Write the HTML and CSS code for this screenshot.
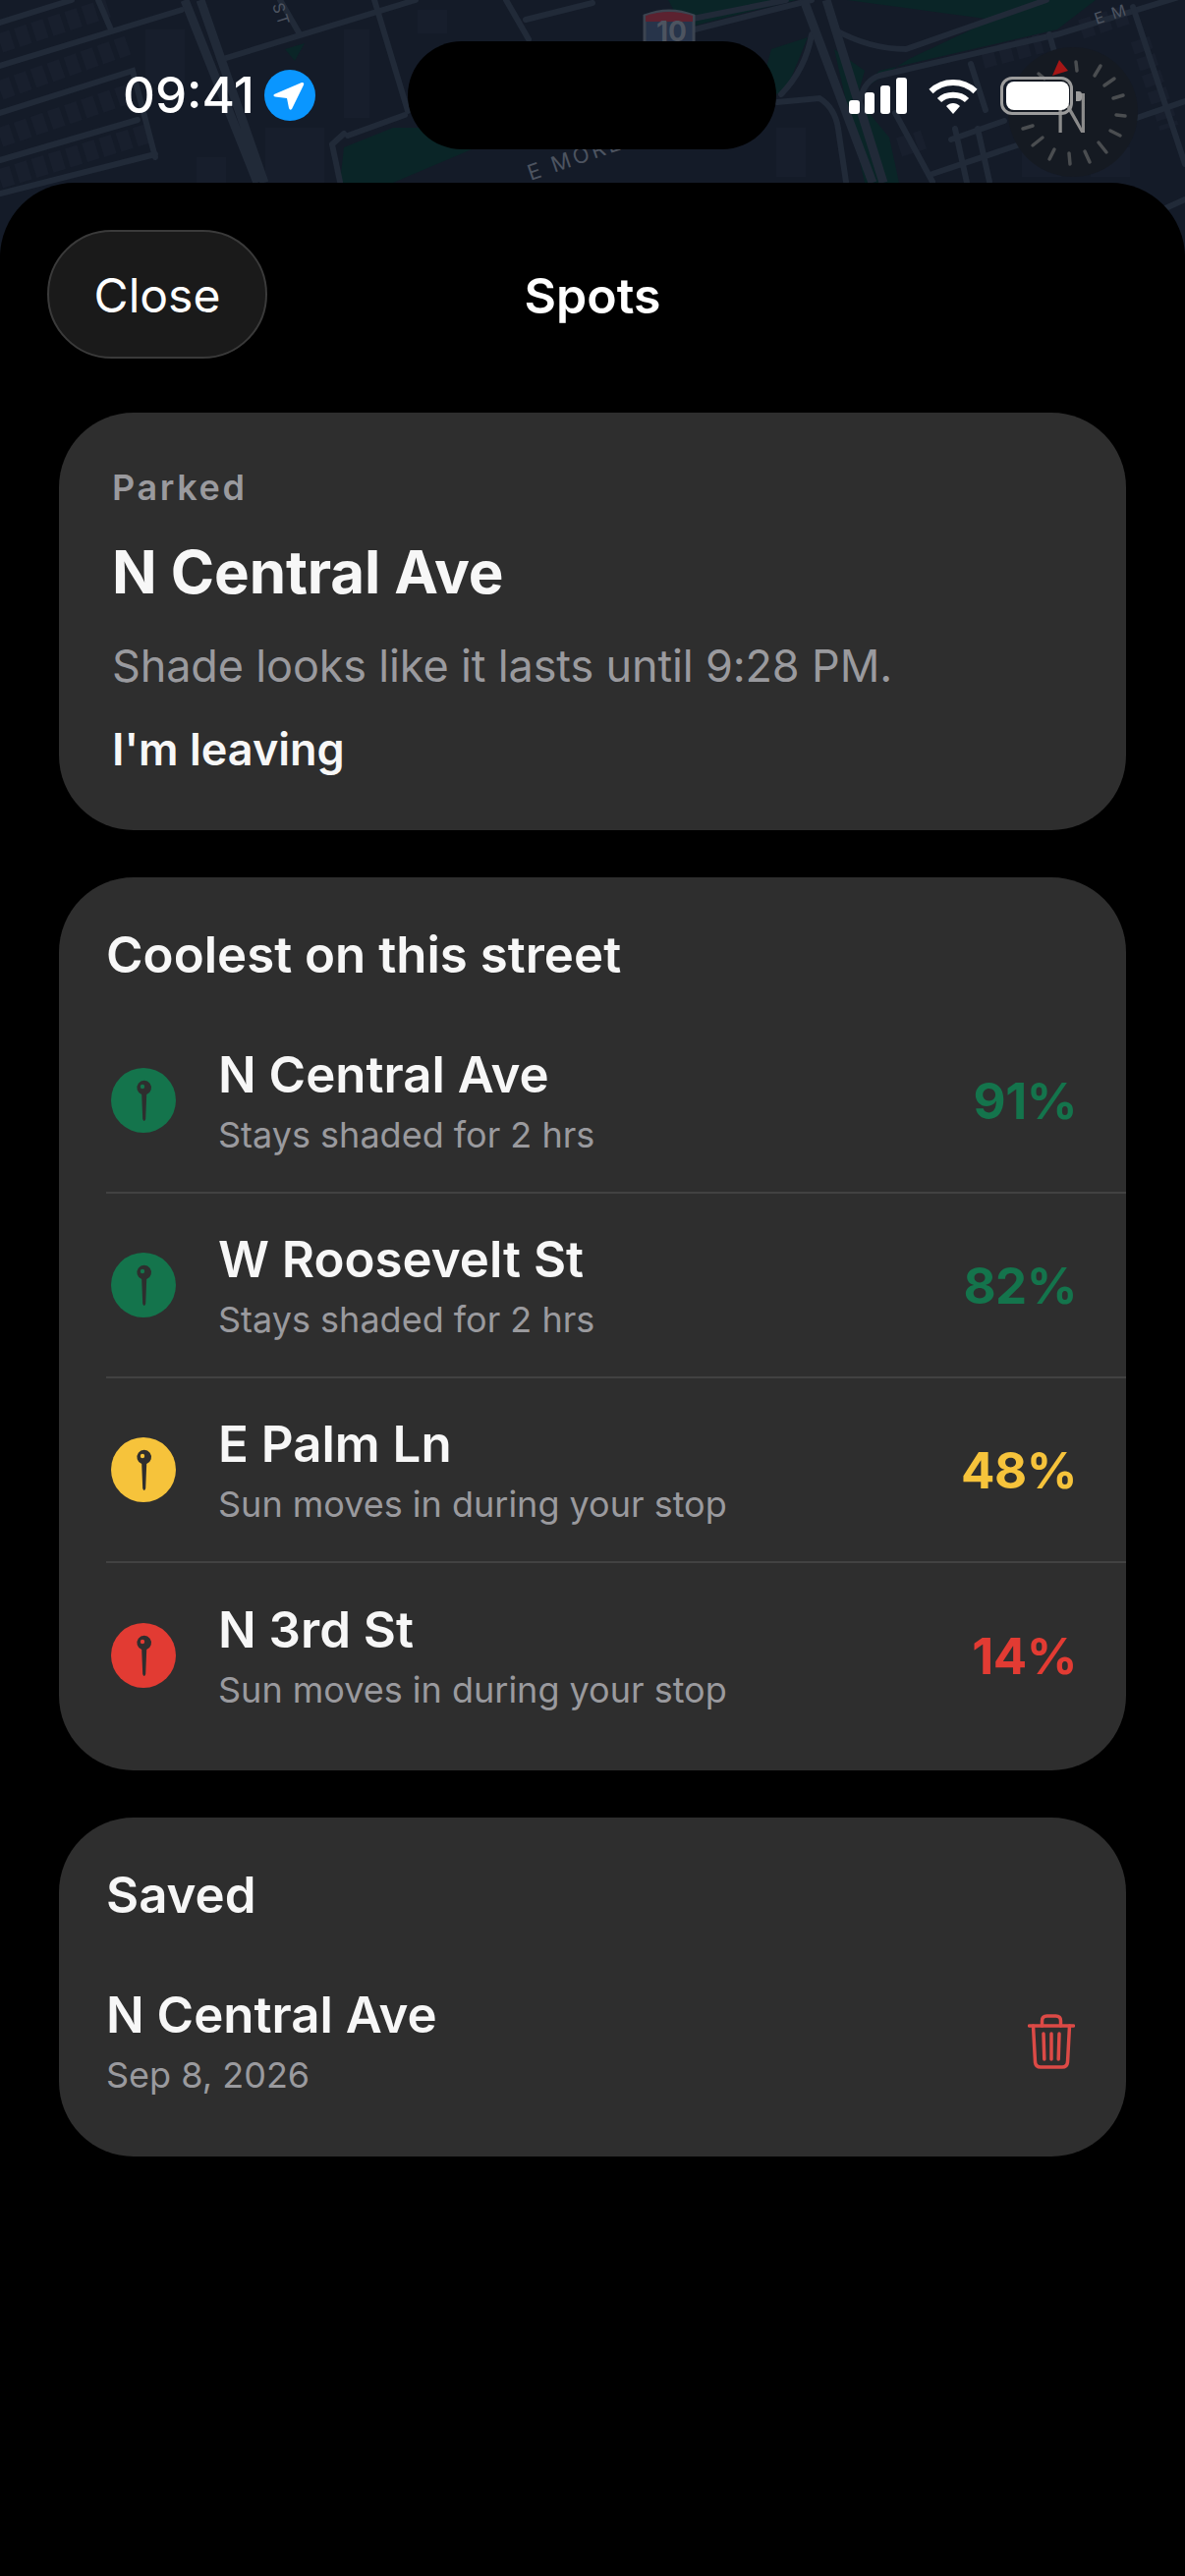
FILE: index.html
```html
<!DOCTYPE html>
<html lang="en">
<head>
    <meta charset="UTF-8">
    <meta name="viewport" content="width=device-width, initial-scale=1.0">
    <title>Spots</title>
    <link rel="stylesheet" href="styles.css">
</head>
<body>
    <div class="screen">
        <svg class="map" viewBox="0 0 1206 260" width="1206" height="260">
            <rect width="1206" height="260" fill="#141b28"/>
            <g class="park">
                <path d="M680 0 L810 0 L707 26 L690 18Z"/>
                <path d="M862 0 L1115 0 L1076 30 L895 72 L872 95 L925 60 L1010 20Z"/>
                <path d="M785 50 L822 38 L800 92 L770 104Z"/>
                <path d="M849 50 L880 72 L872 100 L905 140 L915 186 L880 186Z"/>
                <path d="M346 186 L350 150 L400 130 L477 130 L480 152 L400 186Z"/>
                <path d="M290 50 L310 44 L300 62Z"/>
            </g>
            <g class="blocks">
                <path d="M148 30h40v55h-40zM350 30h26v90h-26zM270 130h60v56h-60zM200 160h30v26h-30z"/>
                <path d="M425 10h30v24h-30zM1040 130h40v50h-40zM790 130h30v50h-30zM1110 150h40v30h-40z"/>
            </g>
            <g class="rowhouses">
                <path d="M0 44 L110 8"/>
                <path d="M0 92 L130 46"/>
                <path d="M0 140 L135 94"/>
                <path d="M0 182 L150 136"/>
                <path d="M1100 30 L1150 14"/>
                <path d="M1160 40 L1190 130"/>
                <path d="M915 150 L940 142M1000 60 L1060 44"/>
            </g>
            <g class="roads">
                <path d="M0 23 L73 0M0 67 L185 10M0 115 L135 72 L158 160M0 163 L140 122M0 197 L158 157M100 0 L112 28M227 60 L423 0M285 0 L304 33M381 0 L415 113M515 0 L538 40M535 20 L603 3"/>
                <path d="M354 138 L412 117M338 147 L346 185M338 147 L350 136"/>
                <path d="M707 30 L826 0M700 20 L800 0M849 30 Q885 50 922 50 L1065 0M876 100 Q880 82 895 77 L1076 35 L1206 -5M795 96 Q820 70 826 35M791 104 L834 100 Q850 110 853 131 L861 185"/>
                <path d="M911 115 L949 185M988 65 L1003 112M1068 35 L1084 92M972 131 L984 186M995 131 L1007 185M968 142 L1022 123M949 177 L1038 147M1153 7 L1206 167M1157 120 L1206 103M1184 213 L1206 203"/>
            </g>
            <g class="roads-major">
                <path d="M188 0 L262 186M204 0 L269 186"/>
                <path d="M818 0 L888 186M841 0 L899 186"/>
            </g>
            <text class="map-label" transform="translate(540 184) rotate(-19)">E MORELAND</text>
            <text class="map-label map-label-small" transform="translate(1116 25) rotate(-18)">E M</text>
            <text class="map-label map-label-small" transform="translate(277 5) rotate(72)">ST</text>
            <path d="M656 16 Q681 6 706 16 L706 44 L656 44Z" fill="#27344a" stroke="#3c4450" stroke-width="3"/>
            <path d="M657 16 Q681 8 705 16 L705 22 L657 22Z" fill="#5c2230"/>
            <text class="shield-num" x="668" y="42">10</text>
        </svg>

        <div class="compass">
            <svg viewBox="0 0 132 132" width="132" height="132">
                <circle cx="66" cy="66" r="66" fill="#151a22"/>
                <path d="M52 13 L45 29 L61 24Z" fill="#a51616"/>
                <path class="compass-ticks" d="M69 15 L70 24M88 29 L94 19M98 39 L108 32M107 52 L117 49M110 69 L119 70M104 85 L114 90M92 97 L100 107M78 106 L83 117M62 108 L63 119M47 104 L42 114M35 92 L25 100M25 80 L15 83M31 27 L37 32"/>
            </svg>
            <span class="compass-n">N</span>
        </div>

        <div class="status">
            <div class="status-left">
                <span class="time">09:41</span>
                <svg class="loc" viewBox="0 0 52 52" width="52" height="52">
                    <circle cx="26" cy="26" r="26" fill="#0a96ff"/>
                    <path d="M10 25 L38 13 Q41 12.500 40 15.500 L28 40 Q26 42 25 39 L23 29 L11 27.500 Q8.500 26.500 10 25Z" fill="#fff"/>
                </svg>
            </div>
            <div class="island"></div>
            <div class="status-right">
                <svg viewBox="0 0 59 37" width="59" height="37" fill="#fff">
                    <rect x="0" y="23" width="11" height="14" rx="3"/>
                    <rect x="16" y="15" width="10" height="22" rx="3"/>
                    <rect x="32" y="8" width="10" height="29" rx="3"/>
                    <rect x="48" y="0" width="11" height="37" rx="3"/>
                </svg>
                <svg class="wifi" viewBox="0 0 50 37" width="50" height="37" fill="none" stroke="#fff" stroke-width="6">
                    <path d="M2.500 14 C15 2 35 2 47.500 14"/>
                    <path d="M11 23 C18 16 32 16 39 23"/>
                    <path d="M18 29 L25 37 L32 29 C28 25 22 25 18 29Z" fill="#fff" stroke="none"/>
                </svg>
                <div class="battery">
                    <div class="battery-fill"></div>
                    <div class="battery-cap"></div>
                </div>
            </div>
        </div>

        <div class="sheet">
            <div class="nav">
                <button class="close-btn" type="button">Close</button>
                <h1 class="nav-title">Spots</h1>
            </div>

            <section class="card card-parked">
                <div class="eyebrow">Parked</div>
                <div class="parked-name">N Central Ave</div>
                <p class="parked-note">Shade looks like it lasts until 9:28 PM.</p>
                <div class="parked-action">I'm leaving</div>
            </section>

            <section class="card card-list">
                <h2 class="card-title">Coolest on this street</h2>
                <div class="row">
                    <span class="pin pin-green">
                        <svg viewBox="0 0 66 66" width="66" height="66"><path d="M31.200 26.900 L32.200 52 Q33.700 56 35.200 52 L36.200 26.900 A7.300 7.300 0 1 0 31.200 26.900Z" fill="#2e2e2e"/><circle cx="32" cy="19" r="2.200" fill="#14744c"/></svg>
                    </span>
                    <div class="row-text">
                        <div class="row-name">N Central Ave</div>
                        <div class="row-sub">Stays shaded for 2 hrs</div>
                    </div>
                    <span class="pct pct-green">91%</span>
                </div>
                <div class="row">
                    <span class="pin pin-green">
                        <svg viewBox="0 0 66 66" width="66" height="66"><path d="M31.200 26.900 L32.200 52 Q33.700 56 35.200 52 L36.200 26.900 A7.300 7.300 0 1 0 31.200 26.900Z" fill="#2e2e2e"/><circle cx="32" cy="19" r="2.200" fill="#14744c"/></svg>
                    </span>
                    <div class="row-text">
                        <div class="row-name">W Roosevelt St</div>
                        <div class="row-sub">Stays shaded for 2 hrs</div>
                    </div>
                    <span class="pct pct-green">82%</span>
                </div>
                <div class="row">
                    <span class="pin pin-yellow">
                        <svg viewBox="0 0 66 66" width="66" height="66"><path d="M31.200 26.900 L32.200 52 Q33.700 56 35.200 52 L36.200 26.900 A7.300 7.300 0 1 0 31.200 26.900Z" fill="#2e2e2e"/><circle cx="32" cy="19" r="2.200" fill="#f6c33b"/></svg>
                    </span>
                    <div class="row-text">
                        <div class="row-name">E Palm Ln</div>
                        <div class="row-sub">Sun moves in during your stop</div>
                    </div>
                    <span class="pct pct-yellow">48%</span>
                </div>
                <div class="row">
                    <span class="pin pin-red">
                        <svg viewBox="0 0 66 66" width="66" height="66"><path d="M31.200 26.900 L32.200 52 Q33.700 56 35.200 52 L36.200 26.900 A7.300 7.300 0 1 0 31.200 26.900Z" fill="#2e2e2e"/><circle cx="32" cy="19" r="2.200" fill="#e23b33"/></svg>
                    </span>
                    <div class="row-text">
                        <div class="row-name">N 3rd St</div>
                        <div class="row-sub">Sun moves in during your stop</div>
                    </div>
                    <span class="pct pct-red">14%</span>
                </div>
            </section>

            <section class="card card-saved">
                <h2 class="card-title">Saved</h2>
                <div class="saved-row">
                    <div class="row-text">
                        <div class="row-name">N Central Ave</div>
                        <div class="row-sub">Sep 8, 2026</div>
                    </div>
                    <svg class="trash" viewBox="0 0 48 56" width="48" height="56" fill="none" stroke="#dc4a46" stroke-width="3.500" stroke-linecap="round" stroke-linejoin="round">
                        <path d="M1.500 12 H46.500"/>
                        <path d="M14.500 12 V7 Q14.500 2 19.500 2 H28.500 Q33.500 2 33.500 7 V12"/>
                        <path d="M5.500 12 L7.500 49 Q8 54 13 54 H35 Q40 54 40.500 49 L42.500 12"/>
                        <path d="M16 20 L16.800 46M24 20 V46M32 20 L31.200 46"/>
                    </svg>
                </div>
            </section>
        </div>
    </div>
</body>
</html>
```

FILE: styles.css
```css
* {
    box-sizing: border-box;
}

body {
    margin: 0;
    padding: 0;
    background-color: #000;
    font-family: Inter, "Liberation Sans", sans-serif;
    color: #f7f7f7;
}

.screen {
    position: relative;
    width: 1206px;
    height: 2622px;
    overflow: hidden;
    background-color: #000;
}

/* map peeking out behind the sheet */
.map {
    position: absolute;
    top: 0;
    left: 0;
}

.park {
    fill: #0a2527;
}

.blocks {
    fill: #171e2c;
}

.rowhouses {
    fill: none;
    stroke: #181f2d;
    stroke-width: 20;
    stroke-dasharray: 13 5;
}

.roads {
    fill: none;
    stroke: #212a38;
    stroke-width: 6;
    stroke-linecap: round;
}

.roads-major {
    fill: none;
    stroke: #212a38;
    stroke-width: 9;
}

.map-label {
    font-size: 22px;
    letter-spacing: 3px;
    fill: #4d5460;
}

.map-label-small {
    font-size: 16px;
    letter-spacing: 2px;
}

.shield-num {
    font-size: 28px;
    font-weight: 700;
    fill: #4d5460;
}

.compass {
    position: absolute;
    top: 48px;
    left: 1026px;
    width: 132px;
    height: 132px;
}

.compass-ticks {
    fill: none;
    stroke: #4a4d50;
    stroke-width: 3.500;
    stroke-linecap: round;
}

.compass-n {
    position: absolute;
    top: 37px;
    left: 47px;
    font-size: 55px;
    line-height: 60px;
    font-weight: 300;
    color: #8a8a8a;
    transform: scaleX(0.85);
    transform-origin: left center;
}

/* status bar */
.status {
    position: relative;
    display: flex;
    height: 186px;
    padding-top: 42px;
    align-items: flex-start;
}

.status-left {
    display: flex;
    align-items: center;
    width: 415px;
    height: 110px;
    padding-left: 125px;
    gap: 10px;
}

.time {
    font-size: 51px;
    line-height: 60px;
    font-weight: 500;
    color: #fff;
}

.island {
    width: 375px;
    height: 110px;
    border-radius: 55px;
    background-color: #000;
}

.status-right {
    display: flex;
    align-items: center;
    height: 110px;
    padding-left: 74px;
}

.wifi {
    margin-left: 22px;
}

.battery {
    position: relative;
    width: 74px;
    height: 39px;
    margin-left: 23px;
    padding: 2px 1px 2px 3px;
    border: 3px solid #9c9c9c;
    border-radius: 12px;
}

.battery-fill {
    width: 100%;
    height: 100%;
    border-radius: 8px;
    background-color: #fff;
}

.battery-cap {
    position: absolute;
    top: 12px;
    right: -12px;
    width: 6px;
    height: 10px;
    border-radius: 0 3px 3px 0;
    background-color: #9c9c9c;
}

/* sheet */
.sheet {
    position: relative;
    height: 2436px;
    padding: 48px 60px 0;
    border-radius: 76px 76px 0 0;
    background-color: #000;
}

.nav {
    position: relative;
    display: flex;
    justify-content: center;
    align-items: center;
    height: 131px;
    margin-bottom: 55px;
}

.close-btn {
    position: absolute;
    top: 0;
    left: -12px;
    width: 224px;
    height: 131px;
    padding-top: 2px;
    border: 2px solid #3a3a3a;
    border-radius: 66px;
    background-color: #1a1a1a;
    color: #fff;
    font-family: inherit;
    font-size: 48px;
    font-weight: 400;
}

.nav-title {
    margin: 0;
    padding-top: 2px;
    font-size: 50px;
    font-weight: 600;
    color: #fff;
}

.card {
    margin-bottom: 48px;
    border-radius: 76px;
    background-color: #2e2e2e;
}

.card-parked {
    height: 425px;
    padding: 54px 54px 0;
}

.eyebrow {
    font-size: 36px;
    line-height: 44px;
    font-weight: 600;
    letter-spacing: 2.600px;
    color: #9a9a9e;
}

.parked-name {
    margin-top: 28px;
    font-size: 60px;
    line-height: 72px;
    font-weight: 700;
    letter-spacing: -0.100px;
}

.parked-note {
    margin: 32px 0 0;
    font-size: 45px;
    line-height: 56px;
    font-weight: 400;
    letter-spacing: -0.150px;
    color: #9a9a9e;
}

.parked-action {
    margin-top: 29px;
    font-size: 45px;
    line-height: 56px;
    font-weight: 600;
}

.card-list {
    height: 909px;
    padding: 48px 0 0 48px;
}

.card-title {
    margin: 0;
    font-size: 51px;
    line-height: 62px;
    font-weight: 600;
}

.card-list .card-title {
    margin-bottom: 24px;
}

.row {
    display: flex;
    align-items: center;
    height: 188px;
    padding-right: 50px;
    border-bottom: 2px solid #424242;
}

.card-list .row:last-child {
    border-bottom: none;
}

.pin {
    flex: none;
    width: 66px;
    height: 66px;
    margin-left: 5px;
    border-radius: 50%;
}

.pin svg {
    display: block;
}

.pin-green {
    background-color: #14744c;
}

.pin-yellow {
    background-color: #f6c33b;
}

.pin-red {
    background-color: #e23b33;
}

.row-text {
    flex: 1;
    min-width: 0;
}

.card-list .row-text {
    margin-left: 43px;
}

.row-name {
    font-size: 51px;
    line-height: 62px;
    font-weight: 600;
}

.row-sub {
    margin-top: 7px;
    font-size: 36px;
    line-height: 46px;
    color: #9a9a9e;
}

.pct {
    font-size: 51px;
    font-weight: 700;
    letter-spacing: -0.500px;
}

.pct-green {
    color: #14744c;
}

.pct-yellow {
    color: #f6c33b;
}

.pct-red {
    color: #e23b33;
}

.card-saved {
    height: 345px;
    padding: 48px 52px 0 48px;
}

.saved-row {
    display: flex;
    align-items: center;
    margin-top: 60px;
}
```
